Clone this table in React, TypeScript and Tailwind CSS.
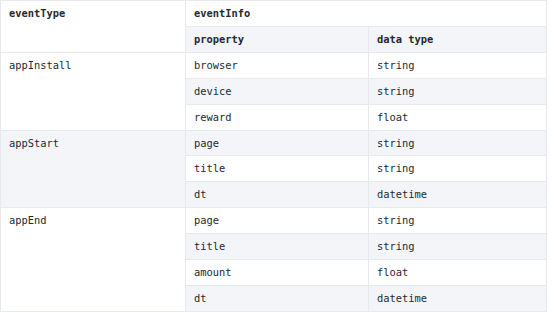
import React from "react";

type Row = { type?: string; span?: number; prop: string; dt: string };

const groups: { type: string; items: [string, string][] }[] = [
  { type: "appInstall", items: [["browser", "string"], ["device", "string"], ["reward", "float"]] },
  { type: "appStart", items: [["page", "string"], ["title", "string"], ["dt", "datetime"]] },
  { type: "appEnd", items: [["page", "string"], ["title", "string"], ["amount", "float"], ["dt", "datetime"]] },
];

export default function App() {
  const rows: Row[] = [];
  groups.forEach((g) =>
    g.items.forEach(([p, d], i) =>
      rows.push({ type: i === 0 ? g.type : undefined, span: i === 0 ? g.items.length : undefined, prop: p, dt: d })
    )
  );
  const cell = "border border-[#e6e9ee] px-2 align-top h-[24.9px] leading-[24.9px] py-0";
  return (
    <div className="w-[554px] h-[312px] bg-white overflow-hidden" style={{ fontFamily: '"DejaVu Sans Mono", monospace' }}>
      <table className="table-fixed border-collapse w-[546px] text-[10.4px] text-[#24292f]">
        <colgroup>
          <col className="w-[185px]" />
          <col className="w-[183px]" />
          <col className="w-[178px]" />
        </colgroup>
        <tbody>
          <tr className="bg-white">
            <td rowSpan={2} className={`${cell} font-bold bg-white`}>eventType</td>
            <td colSpan={2} className={`${cell} font-bold`}>eventInfo</td>
          </tr>
          <tr className="bg-[#f3f5f9]">
            <td className={`${cell} font-bold`}>property</td>
            <td className={`${cell} font-bold`}>data type</td>
          </tr>
          {rows.map((r, i) => (
            <tr key={i} className={i % 2 === 1 ? "bg-[#f3f5f9]" : "bg-white"}>
              {r.type && (
                <td rowSpan={r.span} className={cell}>
                  {r.type}
                </td>
              )}
              <td className={cell}>{r.prop}</td>
              <td className={cell}>{r.dt}</td>
            </tr>
          ))}
        </tbody>
      </table>
    </div>
  );
}
